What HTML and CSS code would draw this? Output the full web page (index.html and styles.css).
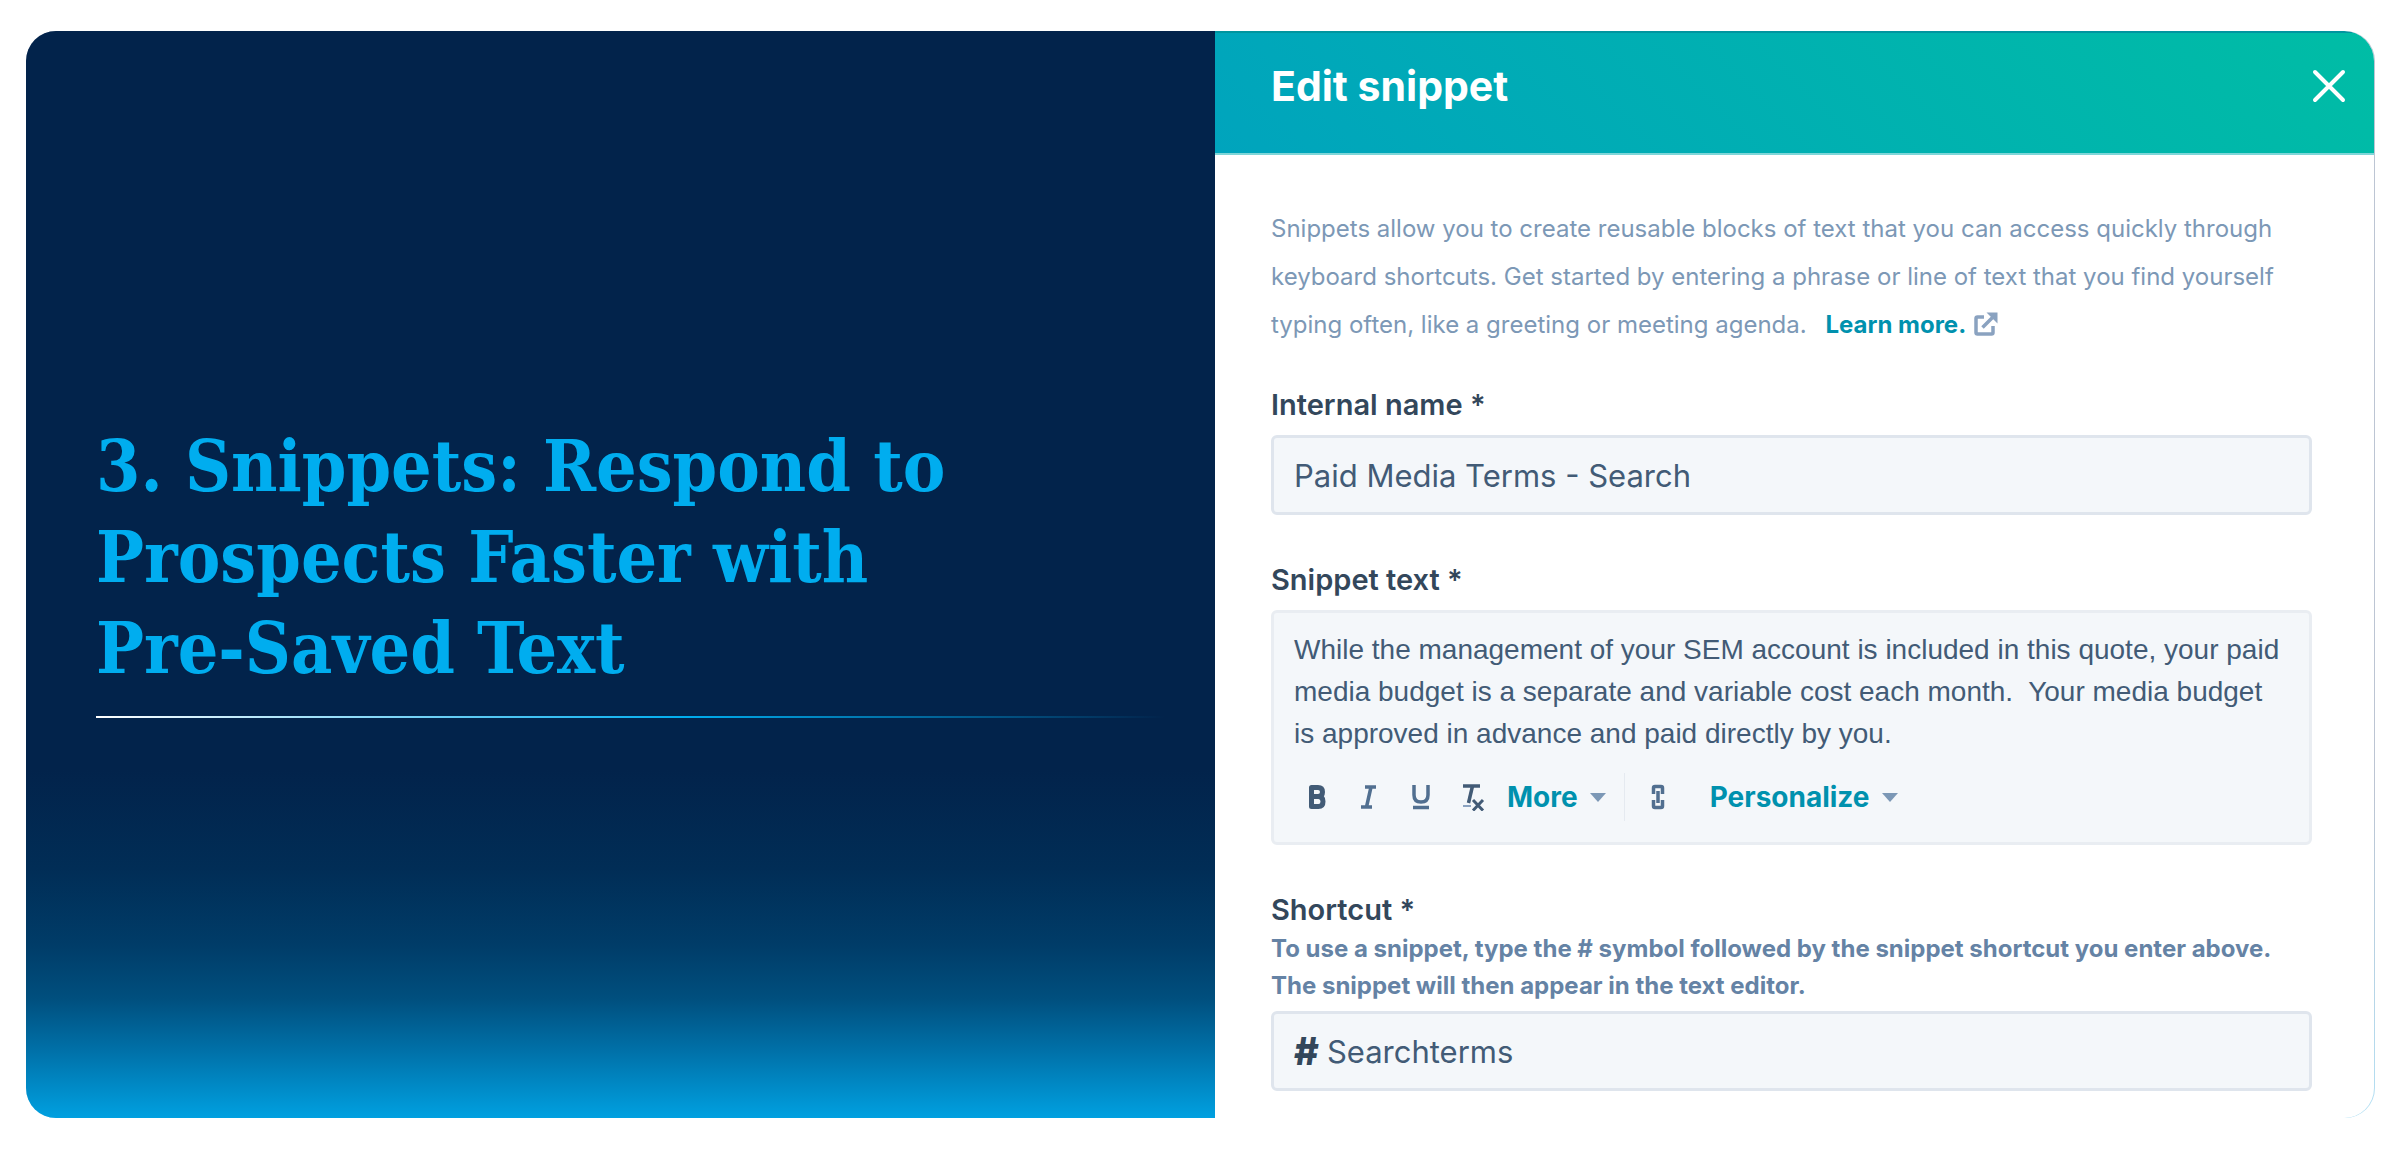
FILE: index.html
```html
<!DOCTYPE html>
<html lang="en">
<head>
    <meta charset="UTF-8">
    <title>Snippets: Respond to Prospects Faster</title>
    <link rel="stylesheet" href="styles.css">
</head>
<body>
    <main class="card">
        <section class="intro">
            <h1>3. Snippets: Respond to<br>Prospects Faster with<br>Pre-Saved Text</h1>
            <hr class="rule">
        </section>
        <section class="panel">
            <header class="panel-header">
                <h2>Edit snippet</h2>
                <button type="button" class="close" aria-label="Close">
                    <svg viewBox="0 0 34 34" width="34" height="34">
                        <path d="M3 3L31 31M31 3L3 31" fill="none" stroke="#fff" stroke-width="4" stroke-linecap="round"/>
                    </svg>
                </button>
            </header>
            <form class="panel-body">
                <p class="description">
                    Snippets allow you to create reusable blocks of text that you can access quickly through keyboard shortcuts. Get started by entering a phrase or line of text that you find yourself typing often, like a greeting or meeting agenda.
                    <a href="#" class="learn-more">Learn more.<svg viewBox="0 0 24 24" width="24" height="24">
                            <path d="M10 5H3.500Q2 5 2 6.500V20.500Q2 22 3.500 22H17.500Q19 22 19 20.500V14M8.500 15.500L20 4" fill="none" stroke="#8aa2c0" stroke-width="3.500"/>
                            <path d="M12.500 0.500H23.500V11.500Z" fill="#8aa2c0"/>
                        </svg></a>
                </p>
                <div class="field">
                    <label for="name">Internal name *</label>
                    <input id="name" class="box" type="text" value="Paid Media Terms - Search">
                </div>
                <div class="field">
                    <label for="text">Snippet text *</label>
                    <div class="editor">
                        <textarea id="text" rows="3">While the management of your SEM account is included in this quote, your paid media budget is a separate and variable cost each month.&nbsp; Your media budget is approved in advance and paid directly by you.</textarea>
                        <div class="toolbar">
                            <button type="button" class="tool" aria-label="Bold">
                                <svg viewBox="0 0 24 28" width="24" height="28">
                                    <path d="M6.500 4.500H13Q17.500 4.500 17.500 9T13 13.500H6.500ZM6.500 13.500H13.500Q18 13.500 18 18.500T13.500 23.500H6.500Z" fill="none" stroke="#425b76" stroke-width="5" stroke-linejoin="round"/>
                                </svg>
                            </button>
                            <button type="button" class="tool" aria-label="Italic">
                                <svg viewBox="0 0 24 28" width="24" height="28">
                                    <path d="M8 4H19M4 24H15M14 4L9.500 24" fill="none" stroke="#516f90" stroke-width="3.500"/>
                                </svg>
                            </button>
                            <button type="button" class="tool" aria-label="Underline">
                                <svg viewBox="0 0 24 28" width="24" height="28">
                                    <path d="M5 2V12Q5 19 12 19T19 12V2M4 24.500H20" fill="none" stroke="#516f90" stroke-width="3.500"/>
                                </svg>
                            </button>
                            <button type="button" class="tool" aria-label="Clear formatting">
                                <svg viewBox="0 0 24 28" width="24" height="28">
                                    <path d="M2 3H19" fill="none" stroke="#425b76" stroke-width="3.500"/>
                                    <path d="M11.500 3L7.500 20" fill="none" stroke="#425b76" stroke-width="3.500"/>
                                    <path d="M2 23H10" fill="none" stroke="#8aa2c0" stroke-width="2"/>
                                    <path d="M12 17L22 27.500M22 17L12 27.500" fill="none" stroke="#425b76" stroke-width="3"/>
                                </svg>
                            </button>
                            <button type="button" class="menu">More <span class="caret"></span></button>
                            <span class="divider"></span>
                            <button type="button" class="tool" aria-label="Insert link">
                                <svg viewBox="0 0 24 28" width="24" height="28">
                                    <path d="M7.500 11V5Q7.500 3.500 9 3.500H15Q16.500 3.500 16.500 5V11M7.500 17V23Q7.500 24.500 9 24.500H15Q16.500 24.500 16.500 23V17M12 8V20" fill="none" stroke="#516f90" stroke-width="3.500"/>
                                </svg>
                            </button>
                            <button type="button" class="menu personalize">Personalize <span class="caret"></span></button>
                        </div>
                    </div>
                </div>
                <div class="field">
                    <label for="shortcut" class="tight">Shortcut *</label>
                    <p class="help">To use a snippet, type the # symbol followed by the snippet shortcut you enter above. The snippet will then appear in the text editor.</p>
                    <div class="box prefixed">
                        <span class="hash">#</span>
                        <input id="shortcut" type="text" value="Searchterms">
                    </div>
                </div>
            </form>
        </section>
    </main>
</body>
</html>
```
FILE: styles.css
```css
* {
    box-sizing: border-box;
}

body {
    margin: 0;
    padding: 31px 26px;
    background: #fff;
    font-family: Inter, "Open Sans", sans-serif;
    color: #33475b;
}

h1, h2, p {
    margin: 0;
}

button, input, textarea {
    border: 0;
    padding: 0;
    background: none;
    font-family: inherit;
    color: inherit;
}

.card {
    display: grid;
    grid-template-columns: 1189fr 1159fr;
    min-height: calc(100vh - 62px);
    padding-right: 1px;
    border-radius: 30px;
    overflow: hidden;
    background: linear-gradient(#bcc5d3 0%, #bcc5d3 70%, #b3e0f4 100%);
}

.intro {
    display: flex;
    flex-direction: column;
    justify-content: center;
    padding: 0 50px 10px 70px;
    background: linear-gradient(#02234b 0%, #02234b 68%, #012d56 77%, #003c68 84%, #004f7e 89%, #0072aa 94%, #00a0e0 100%);
}

.intro h1 {
    font-family: "DejaVu Serif Condensed", "DejaVu Serif", serif;
    font-size: 71px;
    line-height: 91px;
    font-weight: bold;
    color: #00adef;
}

.rule {
    width: 100%;
    height: 2px;
    margin: 22px 0 0;
    border: 0;
    background: linear-gradient(90deg, #fff, #00adef 55%, #02234b);
}

.panel {
    background: #fff;
    border-radius: 0 30px 30px 0;
    overflow: hidden;
}

.panel-header {
    display: flex;
    align-items: center;
    justify-content: space-between;
    height: 124px;
    padding: 0 28px 14px 56px;
    border-top: 2px solid #00959f;
    border-bottom: 2px solid #7fd6d8;
    background: linear-gradient(45deg, #00a4bd, #00bda5);
}

.panel-header h2 {
    font-size: 41px;
    line-height: 50px;
    font-weight: 700;
    color: #fff;
}

.close {
    height: 34px;
}

.close svg {
    display: block;
}

.panel-body {
    padding: 50px 62px 23px 56px;
}

.description {
    margin-bottom: 36px;
    font-size: 24px;
    line-height: 48px;
    color: #7c98b6;
}

.learn-more {
    margin-left: 12px;
    font-weight: 700;
    color: #0091ae;
    text-decoration: none;
}

.learn-more svg {
    margin-left: 8px;
    vertical-align: -3px;
}

.field + .field {
    margin-top: 45px;
}

.field label {
    display: block;
    margin-bottom: 10px;
    font-size: 29px;
    line-height: 40px;
    font-weight: 600;
}

.field label.tight {
    margin-bottom: 0;
}

.box {
    display: block;
    width: 100%;
    height: 80px;
    padding: 0 20px;
    border: 3px solid #dfe5ed;
    border-radius: 6px;
    background: #f4f7fa;
    font-size: 31px;
    color: #425b76;
}

.editor {
    border: 3px solid #e9edf2;
    border-radius: 6px;
    background: #f4f7fa;
}

.editor textarea {
    display: block;
    width: 100%;
    height: 143px;
    padding: 16px 20px 0;
    resize: none;
    overflow: hidden;
    font-family: "Liberation Sans", Arial, sans-serif;
    font-size: 28px;
    line-height: 42px;
    color: #425b76;
}

.toolbar {
    display: flex;
    align-items: center;
    height: 86px;
    padding: 0 0 4px 17px;
}

.tool {
    width: 52px;
    height: 48px;
}

.tool svg {
    display: block;
    margin: 0 auto;
}

.menu {
    display: flex;
    align-items: center;
    gap: 12px;
    margin-left: 8px;
    font-size: 28px;
    font-weight: 700;
    color: #0091ae;
}

.menu.personalize {
    margin-left: 26px;
}

.caret {
    border: 8px solid transparent;
    border-top: 9px solid #7c98b6;
    border-bottom: 0;
}

.divider {
    width: 1px;
    height: 48px;
    margin: 0 7px 0 18px;
    background: #e5eaf0;
}

.help {
    margin-bottom: 7px;
    padding-right: 24px;
    font-size: 24px;
    line-height: 37px;
    font-weight: 700;
    color: #6583a5;
}

.prefixed {
    display: flex;
    align-items: center;
    gap: 8px;
}

.prefixed input {
    flex: 1;
    font-size: 31px;
}

.hash {
    font-size: 38px;
    font-weight: 800;
    color: #33475b;
}
```
